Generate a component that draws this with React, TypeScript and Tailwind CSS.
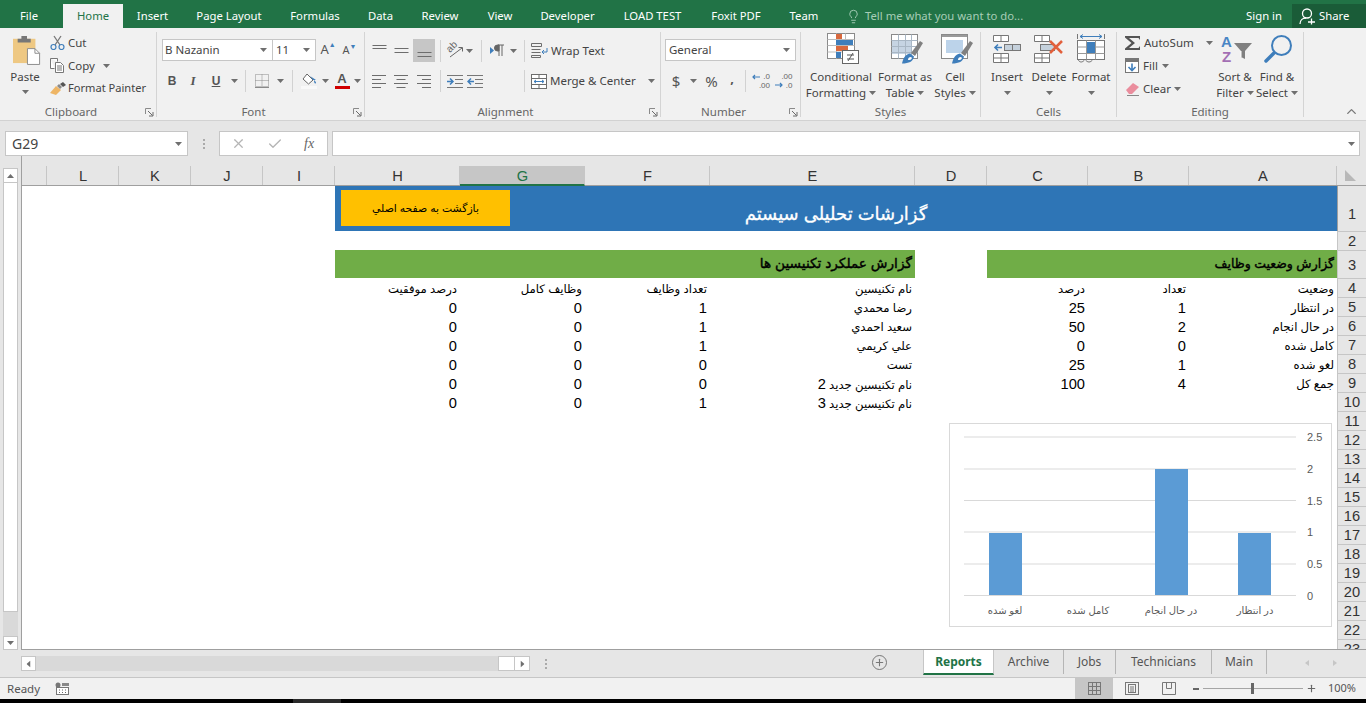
import type { ReactNode } from 'react';
import { Lightbulb, ChevronUp, X, Check, Plus } from 'lucide-react';

const ui = "font-['Noto_Sans',sans-serif]";
const arial = "font-['Liberation_Sans','DejaVu_Sans',sans-serif]";

const tabs = [
  ['File', 58], ['Home', 60], ['Insert', 59], ['Page Layout', 94], ['Formulas', 78], ['Data', 53], ['Review', 66],
  ['View', 54], ['Developer', 81], ['LOAD TEST', 89], ['Foxit PDF', 78], ['Team', 58],
] as const;

const cols = [
  ['', 25], ['L', 72], ['K', 72], ['J', 72], ['I', 72], ['H', 125], ['G', 125], ['F', 125], ['E', 205], ['D', 72], ['C', 101], ['B', 101], ['A', 148],
] as const;

type Cells = Record<string, string | number>;

const rows: { n: number; h: number; cells?: Cells }[] = [
  { n: 4, h: 19, cells: { A: 'وضعیت', B: 'تعداد', C: 'درصد', E: 'نام تکنیسین', F: 'تعداد وظایف', G: 'وظایف کامل', H: 'درصد موفقیت' } },
  { n: 5, h: 19, cells: { A: 'در انتظار', B: 1, C: 25, E: 'رضا محمدي', F: 1, G: 0, H: 0 } },
  { n: 6, h: 19, cells: { A: 'در حال انجام', B: 2, C: 50, E: 'سعید احمدي', F: 1, G: 0, H: 0 } },
  { n: 7, h: 19, cells: { A: 'کامل شده', B: 0, C: 0, E: 'علي کریمي', F: 1, G: 0, H: 0 } },
  { n: 8, h: 19, cells: { A: 'لغو شده', B: 1, C: 25, E: 'تست', F: 0, G: 0, H: 0 } },
  { n: 9, h: 19, cells: { A: 'جمع کل', B: 4, C: 100, E: 'نام تکنیسین جدید 2', F: 0, G: 0, H: 0 } },
  { n: 10, h: 19, cells: { E: 'نام تکنیسین جدید 3', F: 1, G: 0, H: 0 } },
];

function Caret({ className = '' }: { className?: string }) {
  return (
    <svg width="7" height="4" viewBox="0 0 7 4" className={className}>
      <path d="M0 0h7L3.5 4z" fill="#6f6f6f" />
    </svg>
  );
}

function Launcher() {
  return (
    <svg width="9" height="9" viewBox="0 0 9 9" className="absolute right-[2px] top-[4px]">
      <path d="M.5 6V.5H6" fill="none" stroke="#8a8a8a" />
      <path d="M3 3l4.5 4.5M8 4v4H4" fill="none" stroke="#6a6a6a" />
    </svg>
  );
}

function Sep() {
  return <div className="w-px h-[22px] bg-[#d2d2d2]" />;
}

function Slot({ w, children }: { w: number; children?: ReactNode }) {
  return (
    <div className="flex items-center justify-center h-[22px]" style={{ width: w }}>
      {children}
    </div>
  );
}

function Lines({ ys, w = [14, 14, 14] }: { ys: number[]; w?: number[] }) {
  return (
    <svg width="15" height="14" viewBox="0 0 15 14">
      {ys.map((y, i) => (
        <rect key={y} x={(15 - (w[i] ?? 14)) / 2} y={y} width={w[i] ?? 14} height="1" fill="#6d6d6d" />
      ))}
    </svg>
  );
}

function Side({ align }: { align: 'l' | 'c' | 'r' }) {
  const ws = [14, 9, 14, 9];
  return (
    <svg width="15" height="13" viewBox="0 0 15 13">
      {ws.map((w, i) => (
        <rect key={i} x={align === 'l' ? 0 : align === 'c' ? (14 - w) / 2 : 14 - w} y={i * 4} width={w} height="1" fill="#6d6d6d" />
      ))}
    </svg>
  );
}

function Group({ w, label, launcher, children }: { w: number; label: string; launcher?: boolean; children: ReactNode }) {
  return (
    <div className="flex flex-col border-r border-[#d4d4d4] h-[85px] mt-[4px]" style={{ width: w }}>
      <div className="flex-1 min-h-0">{children}</div>
      <div className={`relative top-[2px] h-[15px] text-center text-[11.5px] leading-[15px] text-[#666] ${launcher ? 'pr-[14px]' : ''}`}>
        {label}
        {launcher && <Launcher />}
      </div>
    </div>
  );
}

function BigBtn({ w, icon, l1, l2, caret2 }: { w: number; icon: ReactNode; l1: string; l2?: string; caret2?: boolean }) {
  return (
    <div className="flex flex-col items-center" style={{ width: w }}>
      <div className="h-[34px] flex items-center justify-center">{icon}</div>
      <div className="mt-[3px] text-[11.5px] leading-[16px] text-[#444] whitespace-nowrap">{l1}</div>
      {l2 ? (
        <div className="flex items-center gap-[3px] text-[11.5px] leading-[16px] text-[#444] whitespace-nowrap">
          {l2}
          {caret2 && <Caret />}
        </div>
      ) : (
        <div className="h-[16px] flex items-center"><Caret /></div>
      )}
    </div>
  );
}

function PasteIcon() {
  return (
    <svg width="28" height="30" viewBox="0 0 30 32">
      <rect x="0" y="4" width="24" height="26" fill="#eec883" />
      <path d="M5 4h4V1h6v3h4v4H5z" fill="#777" />
      <path d="M15.5 14.5h8l5 5v12h-13z" fill="#fff" stroke="#888" />
      <path d="M23.5 14.5v5h5" fill="none" stroke="#888" />
    </svg>
  );
}

function ScissorsIcon() {
  return (
    <svg width="15" height="15" viewBox="0 0 15 15">
      <path d="M4 1l6 9M11 1L5 10" stroke="#777" strokeWidth="1.3" fill="none" />
      <circle cx="3.5" cy="12" r="2.5" fill="none" stroke="#3f7ebb" strokeWidth="1.2" />
      <circle cx="11.5" cy="12" r="2.5" fill="none" stroke="#3f7ebb" strokeWidth="1.2" />
    </svg>
  );
}

function CopyIcon() {
  return (
    <svg width="15" height="15" viewBox="0 0 15 15" fill="#fff" stroke="#777">
      <path d="M.5.5h7v3M.5.5v10h4" />
      <path d="M5.5 4.5h5l3 3v7h-8z" />
      <path d="M7 8h5M7 10h5M7 12h5" />
    </svg>
  );
}

function PainterIcon() {
  return (
    <svg width="16" height="14" viewBox="0 0 16 14">
      <path d="M0 11l6-7 5 4-5 5-3-1z" fill="#eeb565" />
      <path d="M7 4l2-2 3 3-2 2z" fill="#8a8a8a" />
      <path d="M10 2l3-2 3 3-3 2z" fill="#555" />
    </svg>
  );
}

function BordersIcon() {
  return (
    <svg width="14" height="14" viewBox="0 0 14 14" fill="none" stroke="#8a8a8a" strokeDasharray="1 1">
      <rect x=".5" y=".5" width="13" height="12" />
      <path d="M7 .5v12M.5 6.5h13" />
      <path d="M0 13.5h14" stroke="#8a8a8a" strokeDasharray="none" />
    </svg>
  );
}

function FillIcon() {
  return (
    <svg width="17" height="16" viewBox="0 0 17 16">
      <path d="M6 1l6 6-4.5 4L2 6z" fill="#fff" stroke="#666" />
      <path d="M13 7c2 2 2.500 3 1.500 3.500S13 9 13 7z" fill="#3f7ebb" />
      <path d="M9 3l3 4h3z" fill="#3f7ebb" />
      <rect x="0" y="13" width="16" height="3" fill="#f9f9f9" />
    </svg>
  );
}

function Tiny({ kind }: { kind: 'orient' | 'rtl' | 'inL' | 'inR' | 'wrap' | 'merge' | 'incD' | 'decD' }) {
  if (kind === 'orient')
    return (
      <svg width="17" height="17" viewBox="0 0 17 17" fill="none" className="overflow-visible">
        <text x="0" y="0" transform="translate(3 11) rotate(-45)" fontSize="10" fontFamily="Liberation Sans" fill="#666">ab</text>
        <path d="M3 15L15 6M11.500 5.500H15.500V9.500" stroke="#666" />
      </svg>
    );
  if (kind === 'rtl')
    return (
      <svg width="15" height="13" viewBox="0 0 15 13">
        <path d="M0 3l4 3.500L0 10z" fill="#3f7ebb" />
        <path d="M9 1H7.500a2.500 2.500 0 0 0 0 6H9V1zm0 0v11M12 1v11M8 1h6" fill="#666" stroke="#666" />
      </svg>
    );
  if (kind === 'inL' || kind === 'inR')
    return (
      <svg width="16" height="13" viewBox="0 0 16 13">
        {[0, 4, 8, 12].map(y => <rect key={y} x={y === 4 || y === 8 ? 8 : 0} y={y} width={y === 4 || y === 8 ? 8 : 16} height="1" fill="#777" />)}
        <path d={kind === 'inL' ? 'M7 6.500H1M4 3.500l-3 3 3 3' : 'M0 6.500h6M3 3.500l3 3-3 3'} fill="none" stroke="#3f7ebb" strokeWidth="1.5" />
      </svg>
    );
  if (kind === 'wrap')
    return (
      <svg width="17" height="15" viewBox="0 0 17 15" fill="none" stroke="#6d6d6d">
        <path d="M.5.5h10v3H.5zM.5 6.500h9M.5 9.500h9M.5 12.500h9v2h-9z" />
        <path d="M16 5v4h-5M13 7l-2 2 2 2" stroke="#3f7ebb" />
      </svg>
    );
  if (kind === 'merge')
    return (
      <svg width="16" height="15" viewBox="0 0 16 15" fill="none" stroke="#6d6d6d">
        <rect x=".5" y=".5" width="15" height="14" fill="#fff" />
        <path d="M.5 4.500h15M.5 10.500h15M8 .5v4M8 10.500v4" />
        <path d="M3 7.500h10M5 6L3 7.500 5 9M11 6l2 1.500L11 9" stroke="#3f7ebb" />
      </svg>
    );
  return (
    <div className={`relative w-[18px] h-[18px] text-[8px] leading-[9px] text-[#666] ${arial}`}>
      <span className="absolute right-0 top-0">{kind === 'incD' ? '.0' : '.00'}</span>
      <span className="absolute right-0 bottom-0">{kind === 'incD' ? '.00' : '.0'}</span>
      <svg width="8" height="6" viewBox="0 0 8 6" className={kind === 'incD' ? 'absolute left-0 top-[2px]' : 'absolute left-0 bottom-[2px]'}>
        <path d={kind === 'incD' ? 'M8 3H1M3 1L1 3l2 2' : 'M0 3h7M5 1l2 2-2 2'} fill="none" stroke="#3f7ebb" strokeWidth="1.2" />
      </svg>
    </div>
  );
}

function CondIcon() {
  return (
    <svg width="32" height="32" viewBox="0 0 32 32" className="ml-[4px]">
      <rect x=".5" y=".5" width="27" height="25" fill="#fff" stroke="#8a8a8a" />
      <path d="M.5 6.500h27M.5 12.500h27M.5 19h27M9.500.5v25M18.500.5v25" stroke="#bbb" fill="none" />
      <rect x="9" y="1" width="6" height="5" fill="#d9693e" />
      <rect x="9" y="7" width="17" height="5" fill="#3f7ebb" />
      <rect x="9" y="13" width="12" height="5" fill="#d9693e" />
      <rect x="9" y="19" width="5" height="6" fill="#3f7ebb" />
      <rect x="15.500" y="17.500" width="16" height="13" fill="#fff" stroke="#666" />
      <path d="M20 22h7M20 26h7M26 20l-5 8" stroke="#555" fill="none" />
    </svg>
  );
}

function TableIcon({ cell }: { cell?: boolean }) {
  return (
    <svg width="32" height="30" viewBox="0 0 32 30" className="ml-[4px]">
      <rect x=".5" y=".5" width="26" height="24" fill="#fff" stroke="#8a8a8a" />
      {cell ? (
        <>
          <rect x="1" y="1" width="25" height="2" fill="#9a9a9a" />
          <rect x="5" y="6" width="17" height="13" fill="#bcd3ea" />
        </>
      ) : (
        <>
          <rect x="1" y="6" width="20" height="14" fill="#c6d4e3" />
          <path d="M.5 6.500h26M.5 12.500h26M.5 18.500h26M7.500.5v24M14.500.5v24M20.500.5v24" stroke="#a9b7c5" fill="none" />
        </>
      )}
      <path d="M11 29.500c1-5 3-9 8-10l4 3c-1 5-5 7-12 7z" fill="#3f7ebb" />
      <path d="M17 26c0-2 1-3 3-3l1 1c-1 2-2 2-4 2z" fill="#fff" />
      <path d="M20 19L29 7l3 2-8 13z" fill="#808080" />
    </svg>
  );
}

function InsertIcon() {
  return (
    <svg width="28" height="28" viewBox="0 0 28 28" fill="#fff" stroke="#777">
      <path d="M.5.5h15v6H.5zM8 .5v6M.5 18.500h15v9H.5zM8 18.500v9M.5 23h15" />
      <rect x="11.500" y="9.500" width="16" height="6" fill="#c5d1dc" />
      <path d="M19.500 9.500v6" />
      <path d="M9 12.500H2M5 9.500l-3 3 3 3" fill="none" stroke="#3f7ebb" strokeWidth="1.6" />
    </svg>
  );
}

function DeleteIcon() {
  return (
    <svg width="30" height="28" viewBox="0 0 30 28" fill="#fff" stroke="#777">
      <path d="M.5.5h15v6H.5zM8 .5v6M.5 18.500h15v9H.5zM8 18.500v9M.5 23h15" />
      <rect x="6.500" y="9.500" width="14" height="6" fill="#c5d1dc" />
      <path d="M16 6l12 12M28 6L16 18" stroke="#e2603c" strokeWidth="2.500" fill="none" />
    </svg>
  );
}

function FormatIcon() {
  return (
    <svg width="28" height="31" viewBox="0 0 28 31" fill="none" stroke="#777">
      <path d="M.5 0v5M27.500 0v5" />
      <path d="M3 2.500h22M6 .5l-3 2 3 2M22 .5l3 2-3 2" stroke="#3f7ebb" />
      <rect x=".5" y="6.500" width="27" height="19" fill="#fff" />
      <path d="M9.500 6.500v19M18.500 6.500v19M.5 13h27M.5 19.500h27" stroke="#999" />
      <rect x="10" y="8" width="8" height="11" fill="#3f7ebb" stroke="none" />
      <path d="M1 25c1 4 5 4 7 0 2 4 6 4 8 0" />
    </svg>
  );
}

function SigmaIcon() {
  return (
    <svg width="16" height="14" viewBox="0 0 16 14">
      <path d="M0 0h15v4l-1.500-2H4l6 5-6 5h9.500L15 10v4H0v-1.500L6.500 7 0 1.500z" fill="#555" />
    </svg>
  );
}

function FillDownIcon() {
  return (
    <svg width="14" height="15" viewBox="0 0 14 15">
      <rect x=".5" y=".5" width="13" height="14" fill="#fff" stroke="#777" />
      <rect x="0" y="0" width="14" height="4" fill="#777" />
      <path d="M7 5.500v7M3.500 9L7 12.500 10.500 9" fill="none" stroke="#3f7ebb" strokeWidth="1.6" />
    </svg>
  );
}

function EraserIcon() {
  return (
    <svg width="15" height="14" viewBox="0 0 15 14">
      <path d="M1 8l7-7 6 4-7 7H4z" fill="#ea8d9d" />
      <path d="M2 13.500h12" stroke="#888" />
    </svg>
  );
}

function SortIcon() {
  return (
    <svg width="32" height="30" viewBox="0 0 32 30" className="ml-[3px]">
      <text x="0" y="13" fontSize="15" fontWeight="700" fontFamily="Liberation Sans" fill="#4a86c5">A</text>
      <text x="1" y="28" fontSize="15" fontWeight="700" fontFamily="Liberation Sans" fill="#a36fb4">Z</text>
      <path d="M13 9h18l-7 8v8l-4-2v-6z" fill="#808080" />
      <path d="M20 17v6" stroke="#fff" />
    </svg>
  );
}

function FindIcon() {
  return (
    <svg width="28" height="30" viewBox="0 0 28 30" fill="none" className="ml-[2px]">
      <circle cx="17.500" cy="11.500" r="9.500" stroke="#3f7ebb" strokeWidth="2" />
      <path d="M10 19L2 27" stroke="#3f7ebb" strokeWidth="3.500" strokeLinecap="round" />
    </svg>
  );
}

function ShareIcon() {
  return (
    <svg width="17" height="17" viewBox="0 0 17 17" fill="none" stroke="#fff" strokeWidth="1.3">
      <circle cx="8" cy="5.500" r="4.500" />
      <path d="M1 16c0-3.500 2.500-6 6-6M9 14h7M12.500 10.500v6" />
    </svg>
  );
}

function Ribbon() {
  return (
    <div className={`flex h-[93px] bg-[#f1f1f1] border-b border-[#d2d2d2] ${ui}`}>
      <Group w={157} label="Clipboard" launcher>
        <div className="flex">
          <div className="w-[50px] pt-[3px] flex flex-col items-center">
            <div className="ml-[4px] h-[30px]"><PasteIcon /></div>
            <div className="mt-[4px] text-[11.5px] leading-[16px] text-[#444]">Paste</div>
            <div className="h-[14px] flex items-center"><Caret /></div>
          </div>
          <div className="-mt-[1px] flex flex-col text-[11.5px] text-[#444]">
            <div className="h-[23px] flex items-center gap-[3px]"><ScissorsIcon />Cut</div>
            <div className="h-[23px] flex items-center gap-[3px]"><CopyIcon />Copy<Caret className="ml-[5px]" /></div>
            <div className="h-[23px] flex items-center gap-[2px] whitespace-nowrap text-[11.1px]"><PainterIcon />Format Painter</div>
          </div>
        </div>
      </Group>

      <Group w={208} label="Font" launcher>
        <div className="pl-[5px] pt-[7px]">
          <div className="flex items-center">
            <div className="w-[111px] h-[22px] bg-white border border-[#c6c6c6] flex items-center justify-between pl-[2px] pr-[5px] text-[11.5px] text-[#444]">
              B Nazanin<Caret />
            </div>
            <div className="w-[43px] h-[22px] bg-white border border-[#c6c6c6] border-l-0 flex items-center justify-between pl-[3px] pr-[5px] text-[11.5px] text-[#444]">
              11<Caret />
            </div>
            <div className="w-[22px] flex justify-center items-start text-[13px] text-[#555] ml-[1px]">A<span className="text-[7px] leading-[9px] text-[#3f7ebb]">▲</span></div>
            <div className="w-[21px] flex justify-center items-start text-[11px] text-[#555]">A<span className="text-[7px] leading-[9px] text-[#3f7ebb]">▼</span></div>
          </div>
          <div className="flex items-center mt-[9px] text-[#555]">
            <Slot w={20}><span className={`${arial} font-bold text-[12px]`}>B</span></Slot>
            <Slot w={22}><span className="font-['Liberation_Serif',serif] italic font-bold text-[13px]">I</span></Slot>
            <Slot w={24}><span className={`${arial} font-bold text-[12px] underline`}>U</span></Slot>
            <Slot w={12}><Caret /></Slot>
            <Slot w={11}><Sep /></Slot>
            <Slot w={22}><BordersIcon /></Slot>
            <Slot w={14}><Caret /></Slot>
            <Slot w={11}><Sep /></Slot>
            <Slot w={22}><FillIcon /></Slot>
            <Slot w={11}><Caret /></Slot>
            <Slot w={22}>
              <div className={`flex flex-col items-center ${arial} font-bold text-[13px] leading-[12px]`}>
                A<div className="w-[15px] h-[3px] bg-[#d00000] mt-[1px]" />
              </div>
            </Slot>
            <Slot w={9}><Caret /></Slot>
          </div>
        </div>
      </Group>

      <Group w={296} label="Alignment" launcher>
        <div className="pl-[3px] pt-[7px]">
          <div className="flex items-center">
            <Slot w={22}><Lines ys={[1, 4]} /></Slot>
            <Slot w={23}><Lines ys={[4, 8]} /></Slot>
            <div className="w-[22px] h-[23px] bg-[#c6c6c6] flex items-center justify-center"><Lines ys={[8, 12]} /></div>
            <Slot w={10}><Sep /></Slot>
            <Slot w={20}><Tiny kind="orient" /></Slot>
            <Slot w={9}><Caret /></Slot>
            <Slot w={15}><Sep /></Slot>
            <Slot w={17}><Tiny kind="rtl" /></Slot>
            <Slot w={14}><Caret /></Slot>
            <Slot w={8}><Sep /></Slot>
            <div className="ml-[3px] flex items-center gap-[3px] text-[11.5px] text-[#444]"><Tiny kind="wrap" />Wrap Text</div>
          </div>
          <div className="flex items-center mt-[8px]">
            <Slot w={22}><Side align="l" /></Slot>
            <Slot w={23}><Side align="c" /></Slot>
            <Slot w={22}><Side align="r" /></Slot>
            <Slot w={10}><Sep /></Slot>
            <Slot w={20}><Tiny kind="inR" /></Slot>
            <Slot w={20}><Tiny kind="inL" /></Slot>
            <Slot w={35} />
            <Slot w={8}><Sep /></Slot>
            <div className="ml-[3px] flex items-center gap-[3px] text-[11.5px] text-[#444] whitespace-nowrap"><Tiny kind="merge" />Merge &amp; Center<Caret className="ml-[9px]" /></div>
          </div>
        </div>
      </Group>

      <Group w={140} label="Number" launcher>
        <div className="pl-[4px] pt-[7px]">
          <div className="w-[131px] h-[22px] bg-white border border-[#c6c6c6] flex items-center justify-between pl-[3px] pr-[5px] text-[11.5px] text-[#444]">
            General<Caret />
          </div>
          <div className="flex items-center mt-[9px] text-[#555]">
            <Slot w={22}><span className="text-[15px]">$</span></Slot>
            <Slot w={12}><Caret /></Slot>
            <Slot w={25}><span className="text-[15px]">%</span></Slot>
            <Slot w={16}><span className="font-bold text-[13px] leading-[8px] -mt-[7px]">,</span></Slot>
            <Slot w={10}><Sep /></Slot>
            <Slot w={22}><Tiny kind="incD" /></Slot>
            <Slot w={23}><Tiny kind="decD" /></Slot>
          </div>
        </div>
      </Group>

      <Group w={180} label="Styles">
        <div className="flex pl-[5px]">
          <BigBtn w={70} icon={<CondIcon />} l1="Conditional" l2="Formatting" caret2 />
          <BigBtn w={58} icon={<TableIcon />} l1="Format as" l2="Table" caret2 />
          <BigBtn w={42} icon={<TableIcon cell />} l1="Cell" l2="Styles" caret2 />
        </div>
      </Group>

      <Group w={136} label="Cells">
        <div className="flex pl-[5px]">
          <BigBtn w={42} icon={<InsertIcon />} l1="Insert" />
          <BigBtn w={42} icon={<DeleteIcon />} l1="Delete" />
          <BigBtn w={42} icon={<FormatIcon />} l1="Format" />
        </div>
      </Group>

      <Group w={187} label="Editing">
        <div className="flex">
          <div className="-mt-[1px] w-[97px] pl-[8px] flex flex-col text-[11.5px] text-[#444]">
            <div className="h-[23px] flex items-center gap-[3px]"><SigmaIcon />AutoSum<Caret className="ml-[9px]" /></div>
            <div className="h-[23px] flex items-center gap-[4px]"><FillDownIcon />Fill<Caret /></div>
            <div className="h-[23px] flex items-center gap-[3px]"><EraserIcon />Clear<Caret /></div>
          </div>
          <BigBtn w={42} icon={<SortIcon />} l1="Sort &" l2="Filter" caret2 />
          <BigBtn w={42} icon={<FindIcon />} l1="Find &" l2="Select" caret2 />
        </div>
      </Group>

      <div className="flex-1 flex items-end justify-end pr-[7px] pb-[1px]">
        <ChevronUp size={15} strokeWidth={2.2} color="#777" />
      </div>
    </div>
  );
}

function FormulaBar() {
  return (
    <div className="flex items-center h-[25px] mt-[10px] pl-[5px] pr-[6px]">
      <div className={`w-[183px] h-full bg-white border border-[#c6c6c6] flex items-center justify-between pl-[6px] pr-[5px] text-[14px] text-[#444] ${ui}`}>
        G29<Caret />
      </div>
      <div className="w-[31px] flex flex-col items-center gap-[2px]">
        {[0, 1, 2].map(i => <div key={i} className="w-[2px] h-[2px] bg-[#aaa]" />)}
      </div>
      <div className="w-[109px] h-full bg-white border border-[#c6c6c6] flex items-center pl-[11px]">
        <X size={15} color="#b5b5b5" />
        <Check size={16} color="#b5b5b5" className="ml-[21px]" />
        <span className="ml-[21px] font-['Liberation_Serif',serif] italic text-[14px] text-[#666]">fx</span>
      </div>
      <div className="ml-[4px] flex-1 h-full bg-white border border-[#c6c6c6] flex items-center justify-end pr-[4px]">
        <Caret />
      </div>
    </div>
  );
}

function RowHead({ n, h, first }: { n: number; h: number; first?: boolean }) {
  return (
    <div
      className={`w-[29px] shrink-0 bg-[#e6e6e6] border-l border-[#9f9f9f] ${first ? 'pt-[10px]' : 'border-t border-[#c6c6c6]'} flex items-center justify-center text-[14.67px] leading-[18px] text-[#333]`}
      style={{ height: h }}
    >
      {n}
    </div>
  );
}

function DataRow({ n, h, cells }: { n: number; h: number; cells?: Cells }) {
  return (
    <div className="flex" style={{ height: h }}>
      {cols.map(([c, w]) => {
        const v = cells?.[c];
        const num = typeof v === 'number';
        return (
          <div
            key={c || 'x'}
            dir="rtl"
            className={`flex items-center pt-[2px] pr-[3px] whitespace-nowrap text-black ${num ? 'text-[14.67px]' : 'text-[11.7px]'}`}
            style={{ width: w }}
          >
            {num ? (
              <span dir="ltr">{v}</span>
            ) : (
              <span>
                {String(v ?? '').split(/(\d)/).map((p, i) => (
                  /\d/.test(p) ? <span key={i} className="text-[14.67px]">{p}</span> : p
                ))}
              </span>
            )}
          </div>
        );
      })}
      <RowHead n={n} h={h} />
    </div>
  );
}

function Chart() {
  const ys = [437, 469, 500.5, 532, 564, 595.5];
  const labels = ['2.5', '2', '1.5', '1', '0.5', '0'];
  const cats: [string, number][] = [['لغو شده', 1005], ['کامل شده', 1088], ['در حال انجام', 1171], ['در انتظار', 1255]];
  return (
    <svg width="383" height="204" viewBox="949 423 383 204" className="absolute left-[927px] top-[237px] bg-white">
      <rect x="949.500" y="423.500" width="382" height="203" fill="#fff" stroke="#d9d9d9" />
      {ys.map((y, i) => (
        <g key={y}>
          <line x1="964" x2="1296" y1={y} y2={y} stroke="#d9d9d9" />
          <text x="1307" y={y + 4} fontSize="11" fontFamily="Liberation Sans" fill="#595959">{labels[i]}</text>
        </g>
      ))}
      <rect x="989" y="533" width="33" height="62" fill="#5b9bd5" />
      <rect x="1155" y="469" width="33" height="126" fill="#5b9bd5" />
      <rect x="1238" y="533" width="33" height="62" fill="#5b9bd5" />
      {cats.map(([t, x]) => (
        <text key={t} x={x} y="614" textAnchor="middle" direction="rtl" fontSize="10" fontFamily="Liberation Sans, DejaVu Sans, sans-serif" fill="#595959">{t}</text>
      ))}
    </svg>
  );
}

function Sheet() {
  return (
    <div className="flex h-[494px]">
      <div className="w-[22px] shrink-0 pt-[12px] pl-[3px] flex flex-col border-r border-[#9f9f9f]">
        <div className="w-[15px] h-[15px] bg-white border border-[#c6c6c6] flex items-center justify-center"><Caret className="rotate-180" /></div>
        <div className="w-[15px] h-[429px] bg-white border-x border-b border-[#c6c6c6]" />
        <div className="w-[15px] h-[24px] bg-[#d9d9d9]" />
        <div className="w-[15px] h-[14px] bg-white border border-[#c6c6c6] flex items-center justify-center"><Caret /></div>
      </div>
      <div className="flex-1 min-w-0 pt-[10px] flex flex-col">
        <div className={`flex h-[20px] border-b border-[#9f9f9f] text-[14.67px] leading-[20px] text-[#333] ${arial}`}>
          {cols.map(([c, w]) => (
            <div
              key={c || 'x'}
              className={`text-center pl-[1px] border-r border-[#c6c6c6] ${c === 'G' ? 'bg-[#c6c6c6] border-b-2 border-b-[#217346] h-[20px] text-[#217346]' : ''}`}
              style={{ width: w }}
            >
              {c}
            </div>
          ))}
          <div className="w-[29px] flex items-center justify-center pr-[3px]">
            <svg width="11" height="11" viewBox="0 0 11 11"><path d="M0 0v11h11z" fill="#b8b8b8" /></svg>
          </div>
        </div>

        <div className={`relative flex-1 min-h-0 overflow-hidden bg-white border-b border-[#9f9f9f] ${arial}`}>
          <div className="flex h-[45px]">
            <div className="w-[313px]" />
            <div dir="rtl" className="flex-1 bg-[#2e75b6] flex items-center justify-center pt-[12px] text-white text-[18px] [-webkit-text-stroke:0.3px_white]">
              گزارشات تحلیلی سیستم
            </div>
            <RowHead n={1} h={45} first />
          </div>
          <DataRow n={2} h={19} />
          <div className="flex h-[28px]">
            <div className="w-[313px]" />
            <div dir="rtl" className="w-[580px] bg-[#70ad47] flex items-center pt-[1px] pr-[3px] text-black text-[13.7px] [-webkit-text-stroke:0.4px_black]">
              گزارش عملکرد تکنیسین ها
            </div>
            <div className="w-[72px]" />
            <div dir="rtl" className="w-[350px] bg-[#70ad47] flex items-center pt-[1px] pr-[3px] text-black text-[12.5px] [-webkit-text-stroke:0.4px_black]">
              گزارش وضعیت وظایف
            </div>
            <RowHead n={3} h={28} />
          </div>
          {rows.map(r => <DataRow key={r.n} n={r.n} h={r.h} cells={r.cells} />)}
          {[11, 12, 13, 14, 15, 16, 17, 18, 19, 20, 21, 22, 23].map(n => <DataRow key={n} n={n} h={19} />)}

          <button className="absolute left-[319px] top-[4px] w-[169px] h-[36px] bg-[#ffc000] text-[10.8px] text-black" dir="rtl">
            بازگشت به صفحه اصلي
          </button>
          <Chart />
        </div>
      </div>
    </div>
  );
}

function TabBar() {
  const sheets = [['Archive', 70], ['Jobs', 52], ['Technicians', 96], ['Main', 55]] as const;
  return (
    <div className={`flex items-start h-[28px] pl-[21px] bg-[#e6e6e6] border-b border-[#c6c6c6] ${ui}`}>
      <div className="flex items-center mt-[6px]">
        <div className="w-[15px] h-[15px] bg-white border border-[#c6c6c6] flex items-center justify-center"><Caret className="rotate-90" /></div>
        <div className="w-[462px] h-[15px] bg-[#d9d9d9]" />
        <div className="w-[17px] h-[15px] bg-white border border-[#c6c6c6]" />
        <div className="w-[15px] h-[15px] bg-white border border-[#c6c6c6] border-l-0 flex items-center justify-center"><Caret className="-rotate-90" /></div>
        <div className="ml-[15px] flex flex-col gap-[2px]">
          {[0, 1, 2].map(i => <div key={i} className="w-[2px] h-[2px] bg-[#aaa]" />)}
        </div>
      </div>
      <div className="ml-[325px] mt-[5px] w-[15px] h-[15px] rounded-full border border-[#777] flex items-center justify-center">
        <Plus size={11} strokeWidth={2.4} color="#777" />
      </div>
      <div className="ml-[36px] w-[71px] h-[25px] bg-white border-x border-[#c6c6c6] border-b-2 border-b-[#217346] flex items-center justify-center text-[12px] font-bold text-[#217346]">
        Reports
      </div>
      {sheets.map(([name, w]) => (
        <div key={name} className="h-[24px] border-r border-[#b5b5b5] flex items-center justify-center text-[12px] text-[#555]" style={{ width: w }}>
          {name}
        </div>
      ))}
      <div className="ml-[38px] mt-[10px] flex gap-[24px]">
        <svg width="4" height="6" viewBox="0 0 4 6"><path d="M4 0v6L0 3z" fill="#c6c6c6" /></svg>
        <svg width="4" height="6" viewBox="0 0 4 6"><path d="M0 0v6l4-3z" fill="#c6c6c6" /></svg>
      </div>
    </div>
  );
}

function StatusBar() {
  return (
    <div className={`flex items-center h-[21px] bg-[#f1f1f1] pl-[7px] text-[11.5px] text-[#555] ${ui}`}>
      <span>Ready</span>
      <svg width="14" height="13" viewBox="0 0 14 13" className="ml-[15px]">
        <circle cx="3" cy="3" r="2.500" fill="#777" />
        <rect x="7" y="1" width="7" height="3" fill="#888" />
        <rect x="1.500" y="5.500" width="12" height="7" fill="#fff" stroke="#777" />
        <path d="M4 8h1M7 8h1M10 8h1M4 10.500h1M7 10.500h1M10 10.500h1" stroke="#666" />
      </svg>
      <div className="ml-auto flex items-center h-full">
        <div className="w-[38px] h-full bg-[#c6c6c6] flex items-center justify-center">
          <svg width="13" height="13" viewBox="0 0 13 13" fill="none" stroke="#777"><rect x=".5" y=".5" width="12" height="12" /><path d="M4.500.5v12M8.500.5v12M.5 4.500h12M.5 8.500h12" /></svg>
        </div>
        <div className="w-[37px] flex justify-center">
          <svg width="14" height="13" viewBox="0 0 14 13" fill="none" stroke="#777"><rect x=".5" y=".5" width="13" height="12" /><rect x="3.500" y="2.500" width="7" height="8" /><path d="M5 5h4M5 7h4M5 9h4" /></svg>
        </div>
        <div className="w-[37px] flex justify-center">
          <svg width="14" height="13" viewBox="0 0 14 13" fill="none" stroke="#777"><path d="M.5 12.500V.5h13v12zM4.500.5v6h5v-6" /></svg>
        </div>
        <div className="w-[6px] h-[2px] bg-[#666] ml-[6px]" />
        <div className="relative w-[100px] h-px bg-[#a5a5a5] ml-[4px]">
          <div className="absolute left-[48px] -top-[5px] w-[3px] h-[11px] bg-[#666]" />
        </div>
        <Plus size={11} strokeWidth={2.5} color="#666" className="ml-[3px]" />
        <span className="w-[46px] text-center text-[11px] pl-[4px]">100%</span>
        <div className="w-[3px]" />
      </div>
    </div>
  );
}

export default function App() {
  return (
    <div className={`w-[1366px] h-[703px] overflow-hidden flex flex-col bg-[#e6e6e6] ${ui}`}>
      <div className="h-[28px] shrink-0 bg-[#217346] flex items-end text-[11.3px] text-white">
        {tabs.map(([name, w]) => (
          <div
            key={name}
            className={`h-[24px] flex items-center justify-center whitespace-nowrap ${name === 'Home' ? 'bg-[#f1f1f1] text-[#217346]' : ''} ${name === 'File' ? 'mr-[5px]' : ''}`}
            style={{ width: w }}
          >
            {name}
          </div>
        ))}
        <div className="h-[24px] ml-[13px] flex items-center gap-[4px] text-[#a6cdb7]">
          <Lightbulb size={15} strokeWidth={1.5} />
          Tell me what you want to do...
        </div>
        <div className="ml-auto h-[24px] flex items-center">
          <span className="mr-[10px]">Sign in</span>
          <div className="w-[74px] h-full bg-[#1a5c38] flex items-center pl-[7px] gap-[3px]">
            <ShareIcon />
            Share
          </div>
        </div>
      </div>
      <Ribbon />
      <FormulaBar />
      <Sheet />
      <TabBar />
      <StatusBar />
      <div className="flex-1 bg-black pl-[293px]">
        <div className="w-[48px] h-full bg-[#2a2a2a]" />
      </div>
    </div>
  );
}
